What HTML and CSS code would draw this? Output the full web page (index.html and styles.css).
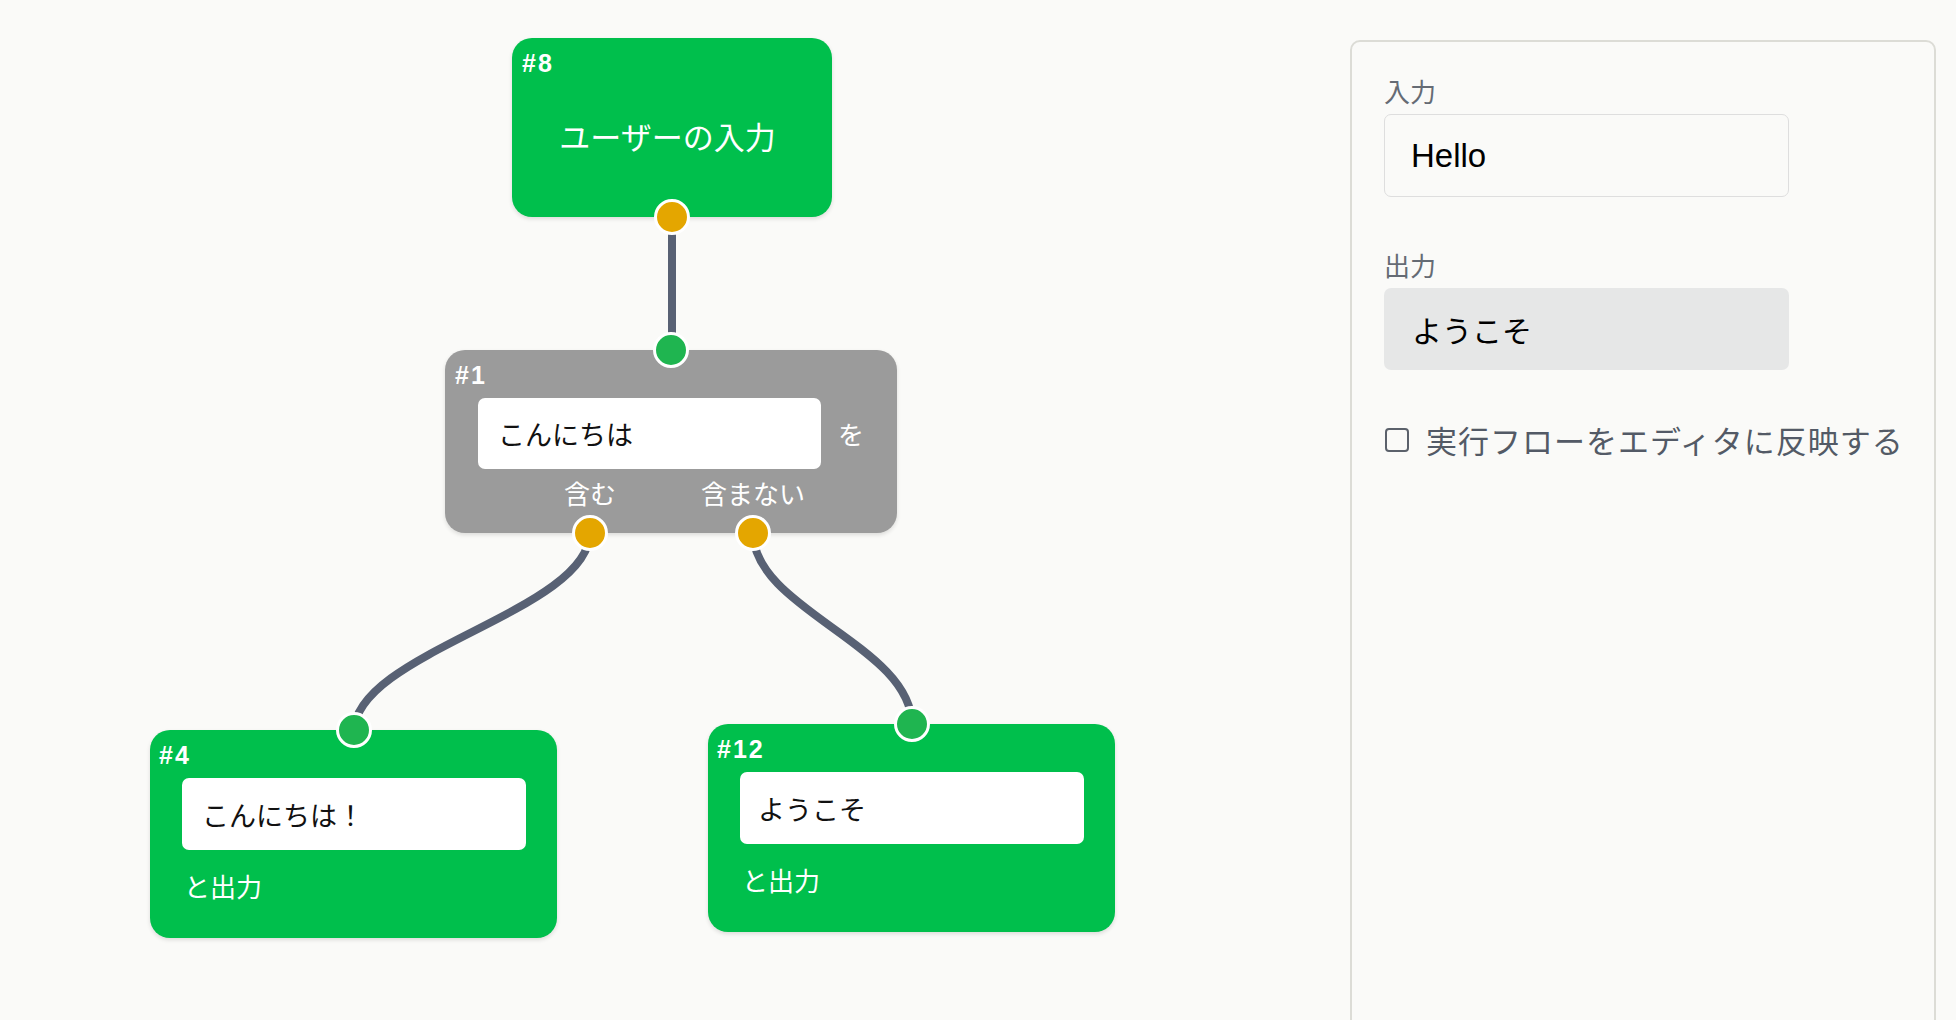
FILE: index.html
```html
<!DOCTYPE html>
<html lang="ja">
<head>
    <meta charset="UTF-8">
    <meta name="viewport" content="width=device-width, initial-scale=1.0">
    <title>フローエディタ</title>
    <link rel="stylesheet" href="styles.css">
</head>
<body>
    <div class="app">
        <div class="canvas">
            <!-- Edges between node ports -->
            <svg class="edges" width="1350" height="1020" viewBox="0 0 1350 1020">
                <path d="M672 218 L672 351" />
                <path d="M590 532 C590 612 354 652 354 732" />
                <path d="M753 532 C753 610 912 645 912 725" />
            </svg>

            <div class="node node-green node-8">
                <div class="node-title">#8</div>
                <div class="node-center">ユーザーの入力</div>
                <span class="port port-out port-bottom"></span>
            </div>

            <div class="node node-gray node-1">
                <span class="port port-in port-top"></span>
                <div class="node-title">#1</div>
                <div class="node-row">
                    <div class="node-input">こんにちは</div>
                    <span class="node-suffix">を</span>
                </div>
                <div class="node-outputs">
                    <div class="out">
                        <span class="out-label">含む</span>
                        <span class="port port-out port-bottom"></span>
                    </div>
                    <div class="out">
                        <span class="out-label">含まない</span>
                        <span class="port port-out port-bottom"></span>
                    </div>
                </div>
            </div>

            <div class="node node-green node-4">
                <span class="port port-in port-top"></span>
                <div class="node-title">#4</div>
                <div class="node-row">
                    <div class="node-input">こんにちは！</div>
                </div>
                <div class="node-caption">と出力</div>
            </div>

            <div class="node node-green node-12">
                <span class="port port-in port-top"></span>
                <div class="node-title">#12</div>
                <div class="node-row">
                    <div class="node-input">ようこそ</div>
                </div>
                <div class="node-caption">と出力</div>
            </div>
        </div>

        <aside class="panel">
            <div class="field">
                <label class="field-label" for="input">入力</label>
                <div class="field-input" id="input">Hello</div>
            </div>
            <div class="field">
                <div class="field-label">出力</div>
                <div class="field-output">ようこそ</div>
            </div>
            <label class="check-row">
                <span class="checkbox"></span>
                <span class="check-text">実行フローをエディタに反映する</span>
            </label>
        </aside>
    </div>
</body>
</html>
```

FILE: styles.css
```css
* {
    margin: 0;
    padding: 0;
    box-sizing: border-box;
}

:root {
    --node-green: #00bf4c;
    --node-gray: #9b9b9b;
    --port-green: #1fb550;
    --port-orange: #e4a600;
    --edge-color: #586174;
    --bg-color: #fafaf8;
}

html, body {
    height: 100%;
}

body {
    background: var(--bg-color);
    font-family: 'Liberation Sans', 'Noto Sans CJK JP', sans-serif;
    overflow: hidden;
}

.app {
    display: flex;
    height: 100%;
}

/* Canvas */
.canvas {
    flex: 1;
    position: relative;
    height: 1020px;
}

.edges {
    position: absolute;
    left: 0;
    top: 0;
}

.edges path {
    fill: none;
    stroke: var(--edge-color);
    stroke-width: 8;
}

.node {
    position: absolute;
    display: flex;
    flex-direction: column;
    padding: 14px 9px 0;
    border-radius: 20px;
    color: white;
    box-shadow: 0 2px 4px rgba(0,0,0,0.12);
}

.node-green { background: var(--node-green); }
.node-gray { background: var(--node-gray); }

.node-8 { left: 512px; top: 38px; width: 320px; height: 179px; padding-left: 10px; }
.node-1 { left: 445px; top: 350px; width: 452px; height: 183px; padding-left: 10px; }
.node-4 { left: 150px; top: 730px; width: 407px; height: 208px; }
.node-12 { left: 708px; top: 724px; width: 407px; height: 208px; }

.node-title {
    font-size: 25px;
    line-height: 23px;
    font-weight: bold;
    letter-spacing: 2px;
}

.node-center {
    flex: 1;
    display: flex;
    align-items: center;
    justify-content: center;
    font-size: 31px;
    padding-bottom: 22px;
    padding-right: 10px;
}

.node-row {
    display: flex;
    align-items: center;
    margin-top: 11px;
    margin-left: 23px;
}

.node-input {
    width: 343px;
    height: 71px;
    display: flex;
    align-items: center;
    padding-left: 20px;
    background: white;
    border-radius: 7px;
    color: #111;
    font-size: 27px;
}

.node-4 .node-input,
.node-12 .node-input {
    width: 344px;
    height: 72px;
}

.node-12 .node-input {
    padding-left: 18px;
}

.node-suffix {
    margin-left: 17px;
    font-size: 26px;
}

.node-caption {
    margin: 21px 0 0 25px;
    font-size: 26px;
    line-height: 34px;
}

.node-outputs {
    display: flex;
    gap: 43px;
    height: 64px;
    margin-top: auto;
    padding-left: 75px;
}

.out {
    position: relative;
    width: 120px;
    padding-top: 9px;
    text-align: center;
}

.out-label {
    font-size: 26px;
    line-height: 34px;
}

.port {
    position: absolute;
    left: 50%;
    width: 36px;
    height: 36px;
    margin-left: -18px;
    border: 3px solid white;
    border-radius: 50%;
}

.port-in { background: var(--port-green); }
.port-out { background: var(--port-orange); }
.port-top { top: -18px; }
.port-bottom { bottom: -18px; }

/* Side panel */
.panel {
    width: 586px;
    height: 1100px;
    margin: 40px 20px 0 0;
    padding: 32px 32px;
    border: 2px solid #dcdcd6;
    border-radius: 10px;
}

.field {
    margin-bottom: 51px;
}

.field-label {
    display: block;
    font-size: 26px;
    line-height: 39px;
    color: #656b74;
    margin-bottom: 1px;
}

.field-input,
.field-output {
    width: 405px;
    height: 83px;
    display: flex;
    align-items: center;
    border-radius: 7px;
    color: #000;
}

.field-input {
    padding-left: 26px;
    border: 1px solid #dedede;
    font-size: 33px;
}

.field-output {
    height: 82px;
    padding-left: 28px;
    background: #e6e7e7;
    font-size: 30px;
}

.check-row {
    display: flex;
    align-items: center;
    height: 46px;
    margin-top: -5px;
}

.checkbox {
    flex-shrink: 0;
    width: 24px;
    height: 24px;
    border: 2px solid #5b616b;
    border-radius: 4px;
    margin: 1px 0 0 1px;
}

.check-text {
    margin-left: 17px;
    font-size: 31px;
    letter-spacing: 1px;
    white-space: nowrap;
    color: #535a66;
}
```
